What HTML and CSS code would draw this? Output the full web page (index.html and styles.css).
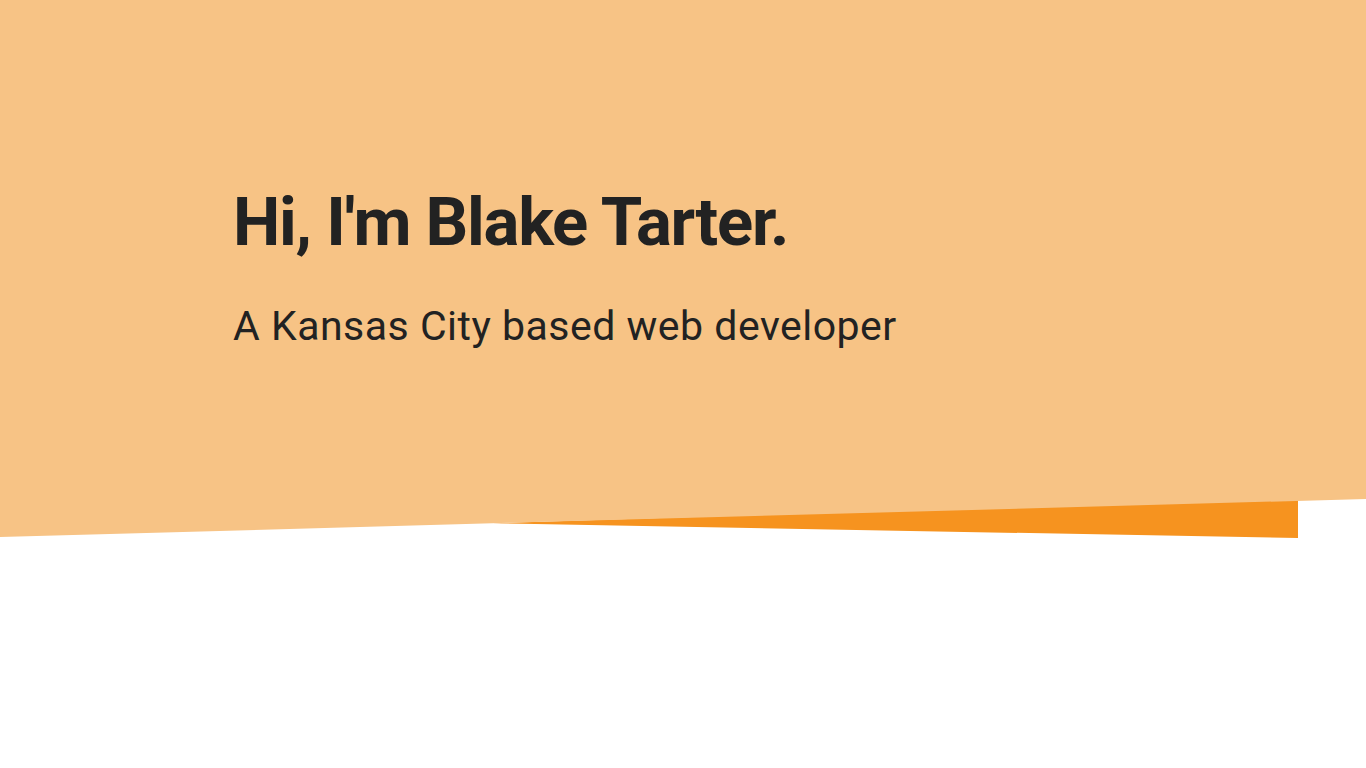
FILE: index.html
```html
<!DOCTYPE html>
<html lang="en">
<head>
<meta charset="utf-8">
<title>Blake Tarter</title>
<link rel="stylesheet" href="styles.css">
</head>
<body>
<header class="hero">
  <svg class="hero-bg" viewBox="0 0 1366 540" preserveAspectRatio="none" aria-hidden="true">
    <polygon class="accent" points="493,523.3 1298,498 1298,538"/>
    <polygon class="fill" points="0,0 1366,0 1366,499 0,537"/>
  </svg>
  <div class="container">
    <h1 class="title">Hi, I'm Blake Tarter.</h1>
    <p class="subtitle">A Kansas City based web developer</p>
  </div>
</header>
</body>
</html>
```

FILE: styles.css
```css
html, body {
  margin: 0;
  padding: 0;
  background: #ffffff;
}
body {
  font-family: Roboto, "Liberation Sans", sans-serif;
  color: #222222;
  height: 768px;
  overflow: hidden;
}
.hero {
  position: relative;
  height: 540px;
}
.hero-bg {
  position: absolute;
  left: 0;
  top: 0;
  width: 100%;
  height: 540px;
  z-index: 0;
}
.hero-bg .fill { fill: #f7c385; }
.hero-bg .accent { fill: #f6931f; }
.container {
  position: relative;
  z-index: 1;
  width: 900px;
  margin: 0 auto;
  padding-top: 182px;
}
.title {
  margin: 0;
  font-size: 67px;
  font-weight: 700;
  line-height: 1.2;
  letter-spacing: -1.25px;
}
.subtitle {
  margin: 40px 0 0;
  font-size: 41px;
  font-weight: 400;
  line-height: 1.2;
  letter-spacing: 0.5px;
}
```
